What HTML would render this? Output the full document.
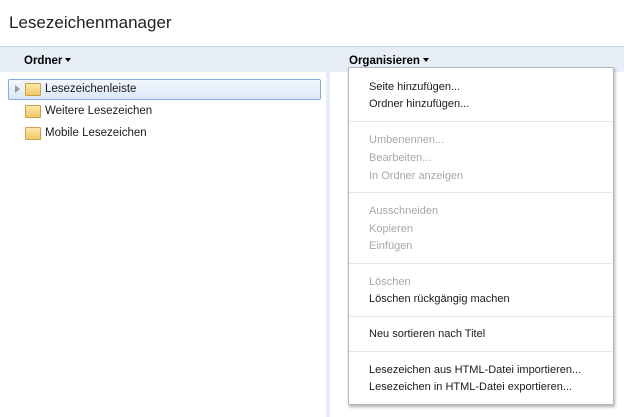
<!DOCTYPE html>
<html><head><style>
body{margin:0;width:624px;height:417px;background:#fff;font-family:"Liberation Sans",sans-serif;position:relative;overflow:hidden;color:#000}
.a{position:absolute;white-space:nowrap}
.title{left:9px;top:13px;font-size:17px;color:#222}
.hdr{left:0;top:46px;width:624px;height:25px;background:#e8eef8;border-top:1px solid #c9d6ea}
.hb{font-size:11.5px;font-weight:bold;top:55px}
.tri{display:inline-block;width:0;height:0;border-left:3.5px solid transparent;border-right:3.5px solid transparent;border-top:4px solid #000;vertical-align:2px;margin-left:3px}
.div{left:326px;top:71px;width:4px;height:346px;background:#e8eef8}
.sel{left:8px;top:79px;width:311px;height:19px;border:1px solid #84acdd;border-radius:2px;background:linear-gradient(#f2f7fe,#dbe8f9)}
.fold{width:14px;height:11px;border:1px solid #c9a24a;border-radius:1px;background:linear-gradient(#fde9a8,#f3c767)}
.it{font-size:11.5px;color:#1a1a1a}
.menu{left:348px;top:67px;width:264px;height:336px;background:#fff;border:1px solid #b8b8b8;box-shadow:1px 2px 3px rgba(0,0,0,.3)}
.m{left:369px;font-size:11px;color:#1a1a1a}
.d{color:#a8a8a8}
.sep{left:349px;width:263px;height:1px;background:#e6e6e6}
</style></head><body>
<div class="a title">Lesezeichenmanager</div>
<div class="a hdr"></div>
<div class="a hb" style="left:24px">Ordner<span class="tri"></span></div>
<div class="a hb" style="left:349px">Organisieren<span class="tri"></span></div>
<div class="a div"></div>
<div class="a sel"></div>
<div class="a" style="left:15px;top:85px;width:0;height:0;border-top:4px solid transparent;border-bottom:4px solid transparent;border-left:5px solid #999"></div>
<div class="a fold" style="left:25px;top:83px"></div>
<div class="a fold" style="left:25px;top:105px"></div>
<div class="a fold" style="left:25px;top:127px"></div>
<div class="a it" style="left:45px;top:83px">Lesezeichenleiste</div>
<div class="a it" style="left:45px;top:105px">Weitere Lesezeichen</div>
<div class="a it" style="left:45px;top:127px">Mobile Lesezeichen</div>
<div class="a menu"></div>
<div class="a m" style="top:81px">Seite hinzufügen...</div>
<div class="a m" style="top:98px">Ordner hinzufügen...</div>
<div class="a sep" style="top:121px"></div>
<div class="a m d" style="top:134px">Umbenennen...</div>
<div class="a m d" style="top:152px">Bearbeiten...</div>
<div class="a m d" style="top:170px">In Ordner anzeigen</div>
<div class="a sep" style="top:192px"></div>
<div class="a m d" style="top:205px">Ausschneiden</div>
<div class="a m d" style="top:223px">Kopieren</div>
<div class="a m d" style="top:240px">Einfügen</div>
<div class="a sep" style="top:263px"></div>
<div class="a m d" style="top:276px">Löschen</div>
<div class="a m" style="top:293px">Löschen rückgängig machen</div>
<div class="a sep" style="top:316px"></div>
<div class="a m" style="top:328px">Neu sortieren nach Titel</div>
<div class="a sep" style="top:351px"></div>
<div class="a m" style="top:364px">Lesezeichen aus HTML-Datei importieren...</div>
<div class="a m" style="top:381px">Lesezeichen in HTML-Datei exportieren...</div>
</body></html>
